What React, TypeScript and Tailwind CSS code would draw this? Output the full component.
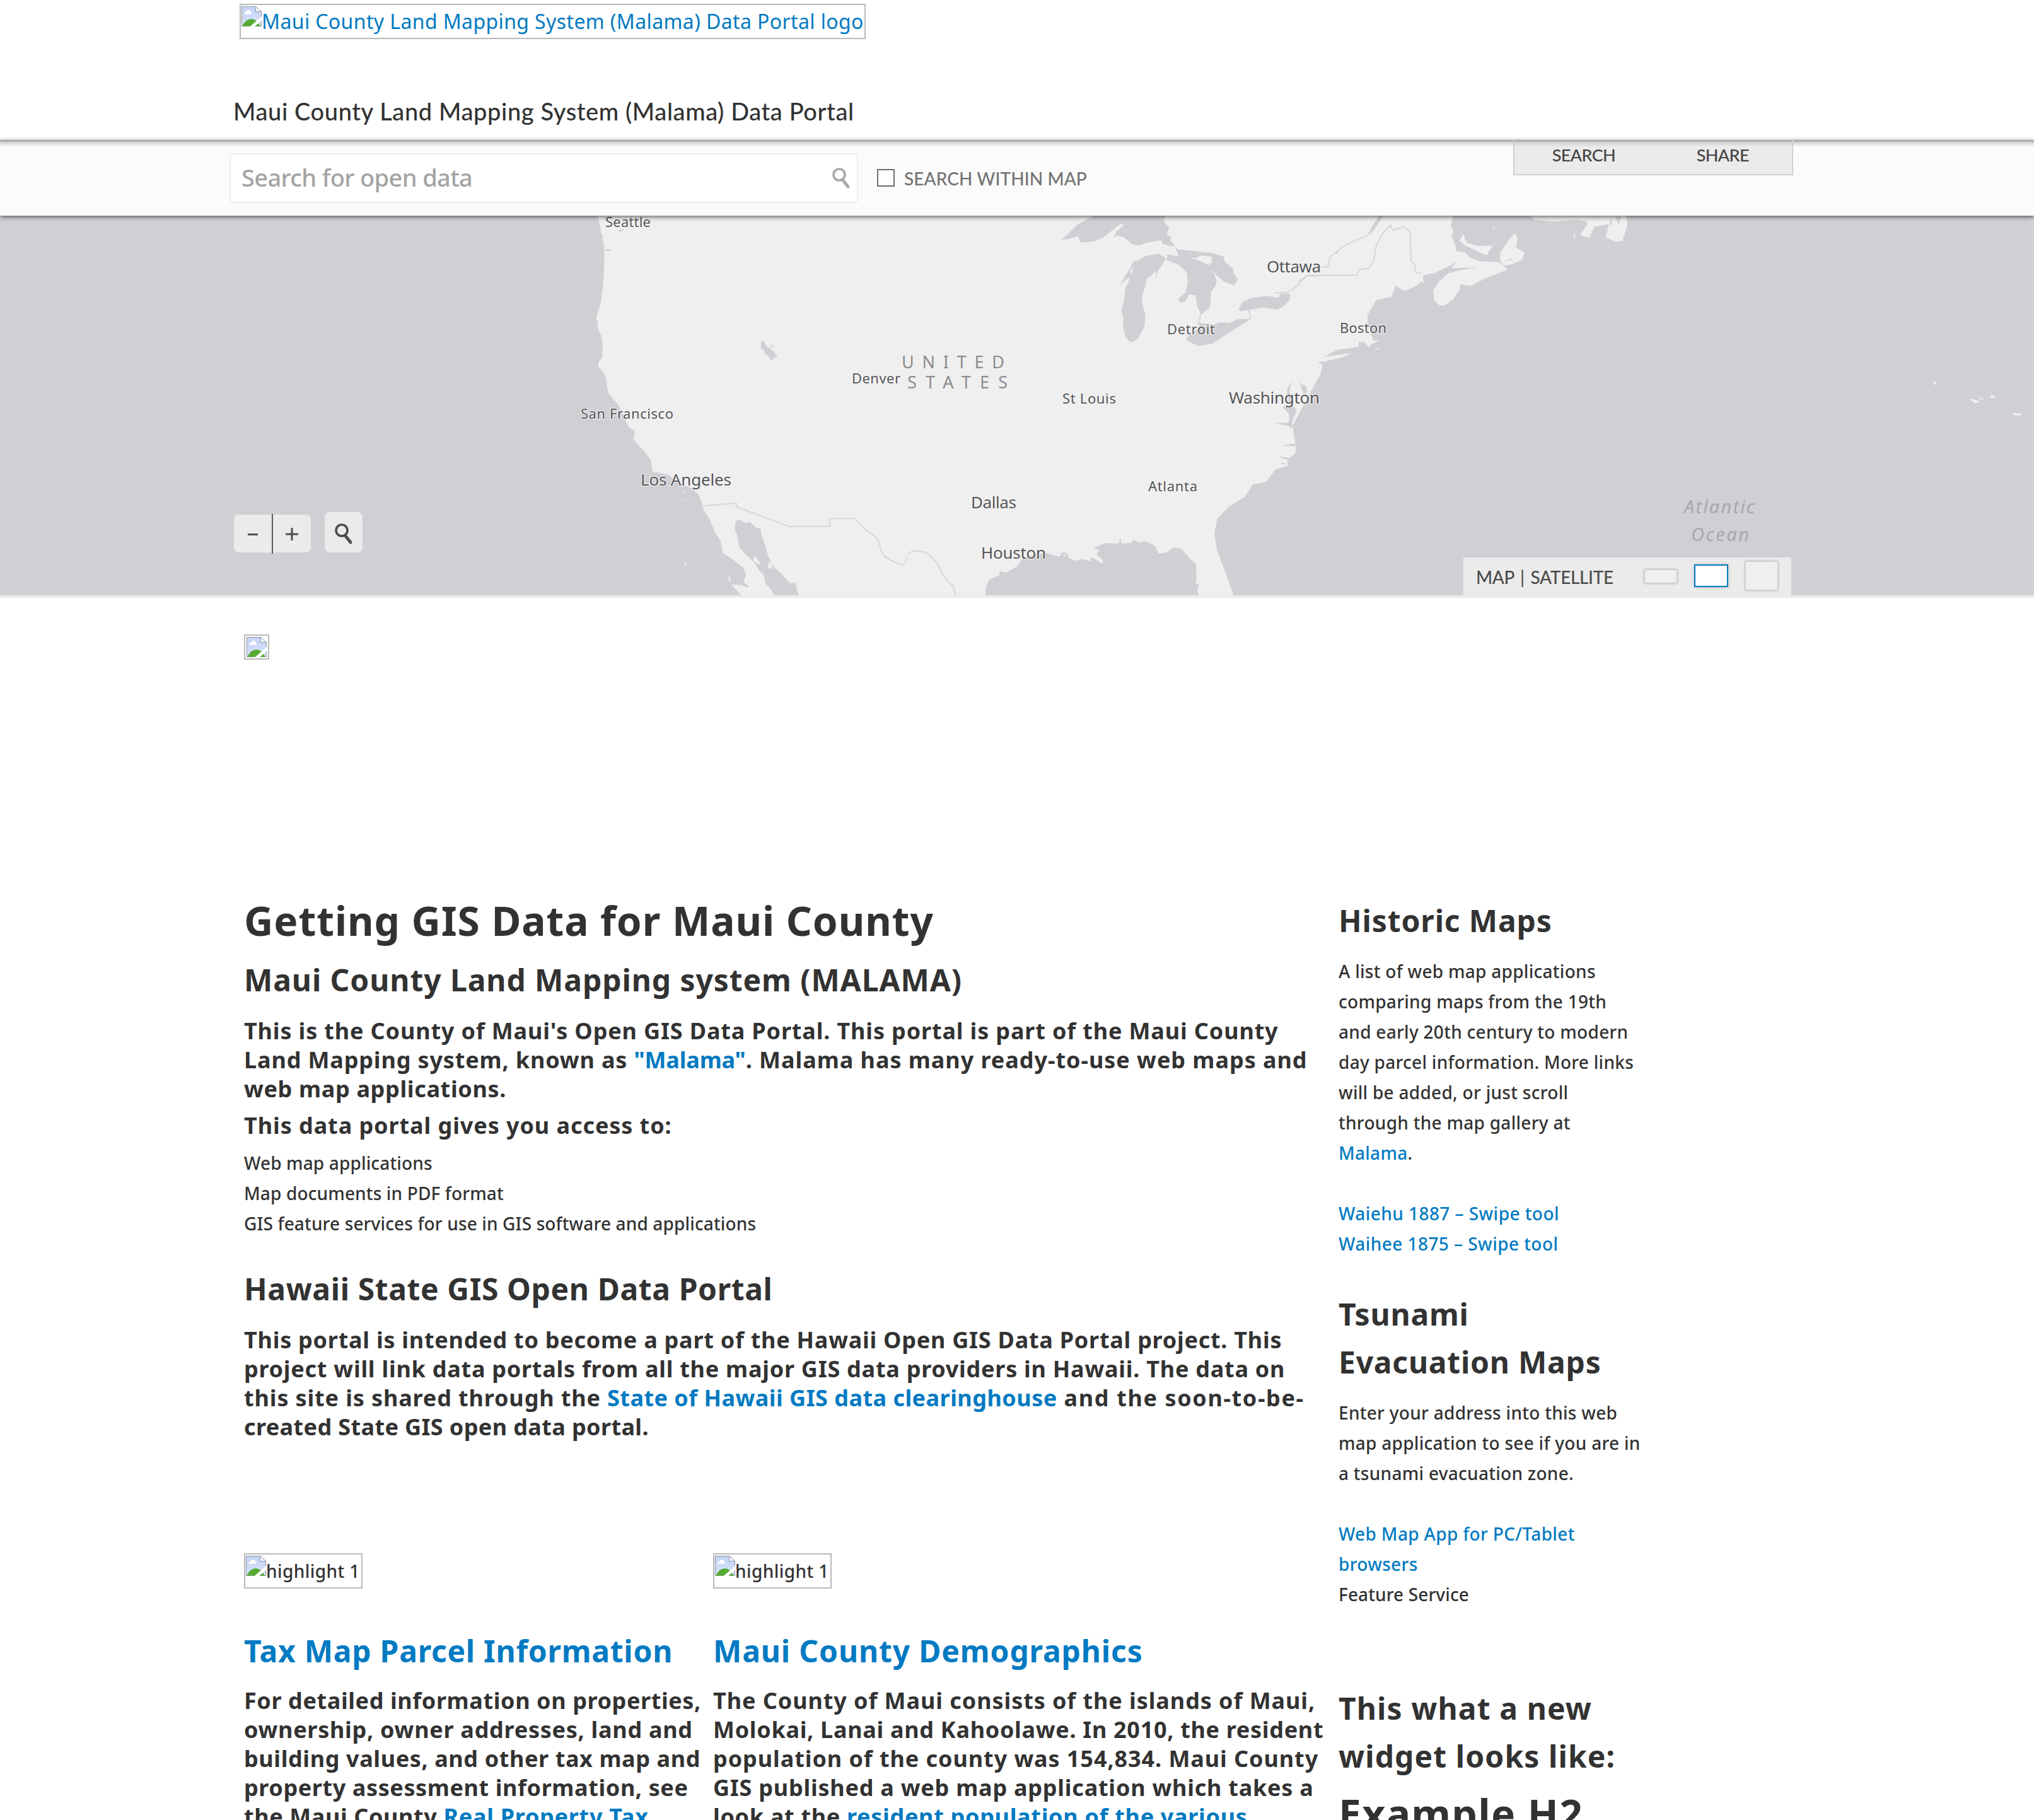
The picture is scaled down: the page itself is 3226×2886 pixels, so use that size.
import type { ReactNode } from "react";

function BrokenImage() {
  return (
    <svg className="size-8 shrink-0" viewBox="0 0 32 32">
      <defs>
        <linearGradient id="sky" x1="0" y1="0" x2="0" y2="1">
          <stop offset="0" stopColor="#c3d3f6" />
          <stop offset="1" stopColor="#d8e2f9" />
        </linearGradient>
      </defs>
      <path d="M.5.5H22.5L31.5 8.500V31.500H.5Z" fill="url(#sky)" stroke="#8f95a3" />
      <path d="M4 12.500q0-2.500 3-3 1-3.500 4-3.500 3.500 0 4 3.500 1.500.5 1.500 3Z" fill="#fff" />
      <path d="M1 31.500Q7 20 15.500 20T30 31.500Z" fill="#56ab31" />
      <path d="M13 32.500 32.500 15.500V22L20.500 32.500Z" fill="#fff" />
      <path d="M22.500.500V8.500H31.500Z" fill="#fff" stroke="#8f95a3" />
    </svg>
  );
}

function AltImage({ children, className }: { children: ReactNode; className: string }) {
  return (
    <div className={"flex items-start border-2 border-[#b9b9b9] pl-px pt-0.5 whitespace-nowrap " + className}>
      <BrokenImage />
      {children}
    </div>
  );
}

function A({ children, className = "" }: { children: ReactNode; className?: string }) {
  return <a className={"text-[#007ac2] " + className}>{children}</a>;
}

type Label = { t: string; x: number; y: number; w: number; s: number };

const labels: Label[] = [
  { t: "Seattle", x: 960, y: 359.5, w: 72, s: 22 },
  { t: "Denver", x: 1351, y: 607.5, w: 77, s: 22 },
  { t: "San Francisco", x: 921, y: 663.5, w: 147, s: 22 },
  { t: "Los Angeles", x: 1016, y: 770, w: 144, s: 26 },
  { t: "Detroit", x: 1851, y: 530, w: 76, s: 22 },
  { t: "Ottawa", x: 2009, y: 431.5, w: 86, s: 26 },
  { t: "St Louis", x: 1685, y: 640, w: 85, s: 22 },
  { t: "Washington", x: 1949, y: 640, w: 144, s: 26 },
  { t: "Atlanta", x: 1821, y: 778.5, w: 78, s: 22 },
  { t: "Dallas", x: 1540, y: 805.7, w: 72, s: 26 },
  { t: "Houston", x: 1556, y: 886, w: 103, s: 26 },
  { t: "Boston", x: 2125, y: 528, w: 74, s: 22 },
];

function WorldMap() {
  return (
    <svg className="block h-[602px] w-full bg-[#d0cfd4]" viewBox="0 342 3226 602" preserveAspectRatio="none">
      {/* Pacific coast, Baja and northern Mexico */}
      <g transform="translate(900 340) scale(.35714 .38903)">
        <path
          fill="#efefef"
          d="M135 5 150 75 158 90 155 100 163 125 164 200 158 290 148 360 135 400 127 425 135 440 135 465 150 495 156 530 155 580 137 605 137 620 160 645 173 670 175 700 183 730 205 755 228 780 240 800 262 850 275 870 298 880 298 895 293 915 310 935 340 965 370 1000 378 1048 420 1055 455 1065 480 1090 550 1115 580 1140 595 1170 602 1200 630 1240 655 1295 680 1330 690 1380 740 1410 780 1440 793 1465 783 1500 805 1515 800 1522 770 1510 728 1508 750 1530 775 1556H918L905 1530 880 1505 870 1465 855 1455 830 1420 790 1385 762 1355 755 1310 743 1285 748 1250 762 1243 790 1258 810 1253 835 1275 858 1280 860 1300 878 1350 890 1390 915 1435 960 1475 990 1505 1013 1500 1018 1530 1030 1556H1600V5Z"
        />
        <path fill="#efefef" d="M825 1395 838 1398 856 1420 850 1427 828 1415ZM897 1415 908 1418 908 1443 893 1444 890 1430ZM518 1418 530 1425 525 1436ZM716 1475 724 1478 722 1494 716 1494Z" />
        <path fill="#e2e2e5" d="M508 1125 520 1128 520 1136 510 1133ZM505 1158 518 1162 512 1170Z" />
        <path fill="#d0cfd4" d="M860 520 870 515 885 540 900 545 915 560 932 575 905 597 890 575 875 570 873 552 860 548ZM900 535 918 532 905 545ZM160 145 180 141 202 146 180 151ZM226 66 246 58 250 62 234 72Z" />
        <path fill="none" stroke="#d6d6d8" strokeWidth="5" d="M600 1188 750 1177V1192L985 1272H1165V1240H1278L1300 1265 1345 1300 1375 1320 1388 1350 1392 1370 1410 1395 1440 1412 1488 1431 1505 1410 1520 1382 1545 1372 1575 1377" />
      </g>

      {/* Great Lakes, Gulf coast and the southern Atlantic seaboard */}
      <g transform="translate(1440 340) scale(.42091 .38903)">
        <path fill="#efefef" d="M0 5H1580V1556H0Z" />
        <g fill="#d0cfd4">
          <path d="M578 103 600 82 640 40 690 12 700 5H968L965 30 985 55 975 80 992 92 988 105 1005 125 1000 132 960 120 955 105 900 115 870 128 845 122 815 95 790 86 776 92 785 70 815 42 800 40 770 65 735 95 700 110 650 115 642 88 600 102Z" />
          <path d="M1005 128 1015 142 1100 152 1145 157 1190 172 1195 195 1225 220 1228 240 1243 265 1230 290 1190 273 1165 250 1150 230 1163 270 1160 290 1142 315 1138 380 1105 408 1090 375 1085 330 1060 325 1045 355 1025 360 1018 345 1045 318 1055 280 1050 235 1020 205 975 187 978 163 1020 170Z" />
          <path d="M972 178 945 160 895 170 870 185 852 190 825 240 800 285 835 255 832 275 818 305 815 345 805 390 812 425 810 460 820 500 838 521 865 510 890 460 895 410 882 360 884 325 895 290 900 262 935 232 935 262 942 230 962 200Z" />
          <path d="M1295 425 1250 455 1200 490 1150 525 1100 537 1075 527 1046 510 1060 490 1100 462 1090 440 1150 450 1175 440 1210 443 1240 428Z" />
          <path d="M1246 388 1260 358 1290 342 1350 332 1395 340 1405 322 1440 325 1438 350 1415 375 1390 388 1340 380 1295 388 1255 395Z" />
          <path d="M290 1556 295 1520 305 1490 345 1470 345 1455 370 1460 410 1435 430 1405 480 1385 520 1380 570 1395 580 1378 600 1380 605 1398 630 1412 660 1405 690 1415 690 1395 735 1425 735 1410 710 1385 722 1370 700 1360 740 1340 795 1342 800 1313 805 1342 845 1338 850 1326 870 1337 895 1332 930 1350 945 1382 970 1380 1000 1358 1030 1362 1060 1400 1085 1425 1088 1480 1085 1505 1098 1505 1090 1530 1098 1556Z" />
          <path d="M1580 590 1545 605 1562 612 1555 650 1530 700 1512 735 1480 800 1450 860 1455 905 1462 950 1460 975 1430 1000 1430 1025 1385 1040 1350 1090 1300 1100 1270 1150 1210 1190 1165 1240 1155 1300 1165 1370 1200 1470 1228 1556H1580Z" />
          <path d="M1471 668 1480 690 1500 700 1506 725 1490 732ZM1448 680 1435 700 1428 720 1440 780 1412 785 1436 812 1436 848 1385 852 1432 862 1448 872 1448 845 1465 800 1450 780 1438 715ZM1408 942 1458 934 1458 946ZM1395 985 1440 993 1425 1000ZM1398 1016 1425 1010 1415 1019Z" />
        </g>
        <path fill="#efefef" d="M1058 175 1090 185 1135 207 1145 195 1145 172 1100 168 1088 178ZM835 230 850 215 842 245ZM580 1386 598 1386 592 1394Z" />
        <g fill="none" stroke="#d6d6d8" strokeWidth="5">
          <path d="M0 1385 20 1370 70 1378 110 1420 135 1475 170 1515 182 1556" />
          <path d="M1103 405 1098 440M1284 386 1290 425M1380 320 1430 318 1460 297 1500 252 1580 248" />
        </g>
      </g>

      {/* New England and the Canadian Maritimes */}
      <g transform="translate(2060 340) scale(.38266 .38903)">
        <path fill="#d0cfd4" d="M104 5H680V640H104Z" />
        <g fill="#efefef">
          <path d="M100 5H640L630 45 640 70 633 85 650 130 652 150 690 155 705 172 745 190 830 195 865 225 780 258 710 292 670 285 665 310 640 345 605 370 585 372 560 350 557 310 580 275 620 240 680 225 740 216 632 220 655 190 630 207 560 240 515 248 515 268 490 290 440 312 400 290 385 335 345 345 320 350 285 410 285 440 300 490 310 515 335 513 300 530 290 542 270 520 248 518 248 540 160 552 100 582Z" />
          <path d="M92 603 110 580 180 570 218 567 180 583ZM835 185 835 155 870 105 895 76 906 95 900 135 935 155 925 185 885 203 845 208ZM665 108 682 80 695 115 740 128 803 128 778 168 745 152 695 130ZM962 8 975 22 1050 28 1155 22 1200 35 1165 85 1205 95 1225 50 1285 40 1272 95 1315 112 1342 108 1362 40 1355 5H962ZM585 5H640L605 22ZM806 45 812 62 806 62ZM1140 70 1146 98 1140 98ZM510 268 522 272 516 282ZM315 545 335 548 320 551Z" />
        </g>
        <g fill="#d0cfd4">
          <path d="M332 5H352L308 68 285 88 298 60ZM145 158 170 142 160 160ZM1290 5 1300 40 1292 45ZM1312 10H1335L1325 42ZM880 178 850 192 882 184ZM1150 30 1195 22 1170 40Z" />
        </g>
        <g fill="none" stroke="#d6d6d8" strokeWidth="5">
          <path d="M285 85 225 110 170 140 130 175 120 212 90 215" />
          <path d="M0 272 40 248H240L250 225 290 220 310 190 320 130 345 80 380 43 390 65 435 50 462 75 465 190 480 205 485 235 510 242" />
        </g>
      </g>

      {/* Azores */}
      <g transform="translate(2600 340) scale(.39923 .38903)" fill="#f3f3f4">
        <ellipse cx="1175" cy="688" rx="5" ry="6" />
        <ellipse cx="1403" cy="743" rx="9" ry="5" />
        <path d="M1308 750 1322 753 1352 762 1335 770ZM1340 741 1368 752 1362 756ZM1480 806 1500 813 1522 809 1512 819 1490 818Z" />
      </g>

      <g fontFamily="'Noto Sans', sans-serif" fill="#565658" stroke="#f5f5f5" strokeWidth="2.5" strokeOpacity=".8" paintOrder="stroke">
        {labels.map((l) => (
          <text key={l.t} x={l.x} y={l.y} fontSize={l.s} textLength={l.w}>
            {l.t}
          </text>
        ))}
      </g>
      <g fontFamily="'Noto Sans', sans-serif" fontSize="27" fill="#8d8d8f">
        <text x="1430" y="584" textLength="163" lengthAdjust="spacing">UNITED</text>
        <text x="1439" y="615.500" textLength="159" lengthAdjust="spacing">STATES</text>
      </g>
      <g fontFamily="'Noto Sans', sans-serif" fontSize="29" fontStyle="italic" fill="#a9a8ad">
        <text x="2671" y="814" textLength="112">Atlantic</text>
        <text x="2682" y="857.500" textLength="92">Ocean</text>
      </g>
    </svg>
  );
}

function Magnifier({ className }: { className: string }) {
  return (
    <svg className={className} viewBox="0 0 28 33" fill="none" stroke="currentColor">
      <circle cx="11" cy="11" r="9" strokeWidth="3.600" />
      <path d="M17.500 20.500 25 30" strokeWidth="5" strokeLinecap="round" />
    </svg>
  );
}

const h2 = "text-[48px] leading-[60px] font-bold";
const h3 = "text-[36px] leading-[46px] font-bold";
const sideTitle = "text-[48px] leading-[76px] font-bold";
const body = "text-[28px] leading-[48px] font-medium";

export default function App() {
  return (
    <div className="h-[2886px] w-[3226px] overflow-hidden bg-white font-['Noto_Sans',sans-serif] whitespace-nowrap text-[#323232]">
      <header className="h-[222px] pt-1.5 pl-[380px]">
        <AltImage className="h-14 w-[993px]">
          <a className="text-[32px] leading-[47px] tracking-[0.012em] text-[#007ac2]">
            Maui County Land Mapping System (Malama) Data Portal logo
          </a>
        </AltImage>
        <div className="mt-[92px] -ml-[10px] font-[Lato,sans-serif] text-[38px] leading-[44px] font-medium tracking-[0.016em]">
          Maui County Land Mapping System (Malama) Data Portal
        </div>
      </header>

      <div className="relative z-10 flex h-[120px] items-start bg-[linear-gradient(to_bottom,#a9a9a9_0,#a9a9a9_2px,#cfcfcf_3px,#fbfbfb_11px)] pl-[364px] shadow-[0_2px_7px_rgba(0,0,0,0.6)]">
        <div className="mt-[21px] flex h-[79px] w-[997px] items-center justify-between rounded-md border-2 border-[#ececec] bg-white pr-[11px] pl-[17px]">
          <span className="-mt-1 text-[38px] leading-[50px] font-medium tracking-[-0.0165em] text-[#a4a4a4]">Search for open data</span>
          <Magnifier className="h-[33px] w-[28px] text-[#a8a8a8]" />
        </div>
        <div className="mt-[46px] ml-[30px] size-7 border-2 border-[#6f6f6f] bg-white" />
        <span className="mt-[41px] ml-[15px] font-[Lato,sans-serif] text-[28px] leading-[40px] font-medium tracking-[0.003em] text-[#737373]">SEARCH WITHIN MAP</span>
        <div className="ml-[676px] flex h-14 w-[444px] border-2 border-t-0 border-[#d0d0d0] bg-[linear-gradient(to_bottom,#a9a9a9_0,#a9a9a9_2px,#cfcfcf_3px,#ebebeb_11px)] pl-[60px] font-[Lato,sans-serif] text-[27px] leading-[48px] font-medium tracking-[-0.025em] text-[#444]">
          <span className="w-[229px]">SEARCH</span>
          <span>SHARE</span>
        </div>
      </div>

      <div className="relative border-b-4 border-[#ebebeb]">
        <WorldMap />
        <div className="absolute bottom-[68px] left-[371px] flex items-end text-[#4e4e4e]">
          <div className="flex h-[60px] w-[122px] items-center rounded-lg bg-[#ebebeb]">
            <div className="flex w-[60px] justify-center">
              <div className="mt-0.5 h-[3px] w-4 bg-[#4e4e4e]" />
            </div>
            <div className="h-[63px] w-0.5 bg-[#5c5c5f]" />
            <svg className="mx-auto mt-0.5 size-5" viewBox="0 0 20 20" stroke="#4e4e4e" strokeWidth="3">
              <path d="M0 10H20M10 0V20" />
            </svg>
          </div>
          <div className="ml-[22px] flex h-16 w-[60px] items-center justify-center rounded-lg bg-[#ebebeb]">
            <Magnifier className="mt-1 h-[33px] w-[28px]" />
          </div>
        </div>
        <div className="absolute right-[385px] bottom-0 flex h-[60px] w-[520px] items-center bg-[#ebebeb] pl-[20px] font-[Lato,sans-serif] text-[28px] font-medium text-[#4c4c4c]">
          <span className="w-[266px] pt-0.5 leading-[64px] tracking-[-0.012em] [word-spacing:3px]">MAP | SATELLITE</span>
          <div className="h-6 w-[54px] shrink-0 rounded border-2 border-[#d0d0d0] bg-[#efefef] shadow-[0_0_3px_rgba(0,0,0,0.2)]" />
          <div className="-mt-0.5 ml-[26px] h-9 w-[54px] shrink-0 border-2 border-[#007ac2] bg-white shadow-[0_0_5px_rgba(0,0,0,0.25)]" />
          <div className="-mt-0.5 ml-[26px] h-12 w-[54px] shrink-0 rounded border-2 border-[#d0d0d0] bg-[#efefef] shadow-[0_0_3px_rgba(0,0,0,0.2)]" />
        </div>
      </div>

      <main className="flex pl-[387px]">
        <div className="w-[1736px] shrink-0 pt-[58px]">
          <div className="flex size-10 items-center justify-center border-2 border-[#b9b9b9]">
            <BrokenImage />
          </div>
          <h1 className="mt-[374px] text-[64px] leading-[80px] font-bold tracking-[0.0148em]">Getting GIS Data for Maui County</h1>
          <h2 className={h2 + " mt-6 tracking-[0.019em]"}>Maui County Land Mapping system (MALAMA)</h2>
          <p className={h3 + " mt-[28px] tracking-[0.0235em]"}>
            This is the County of Maui's Open GIS Data Portal. This portal is part of the Maui County
            <br />
            Land Mapping system, known as <A className="tracking-[-0.005em]">"Malama"</A>
            <span className="tracking-[0.0265em]">. Malama has many ready-to-use web maps and</span>
            <br />
            <span className="tracking-[0.018em]">web map applications.</span>
          </p>
          <p className={h3 + " mt-3 tracking-[0.0255em]"}>This data portal gives you access to:</p>
          <ul className={body + " mt-[12px] tracking-[0.005em]"}>
            <li>Web map applications</li>
            <li>Map documents in PDF format</li>
            <li>GIS feature services for use in GIS software and applications</li>
          </ul>
          <h2 className={h2 + " mt-[50px] tracking-[0.0125em]"}>Hawaii State GIS Open Data Portal</h2>
          <p className={h3 + " mt-[28px] tracking-[0.0206em]"}>
            This portal is intended to become a part of the Hawaii Open GIS Data Portal project. This
            <br />
            project will link data portals from all the major GIS data providers in Hawaii. The data on
            <br />
            <span className="tracking-[0.024em]">this site is shared through the </span>
            <A className="tracking-[0.0128em]">State of Hawaii GIS data clearinghouse</A>
            <span className="tracking-[0.045em]"> and the soon-to-be-</span>
            <br />
            <span className="tracking-[0.0105em]">created State GIS open data portal.</span>
          </p>
          <div className="mt-[177px] flex">
            <section className="w-[744px] shrink-0">
              <AltImage className="h-14 w-[188px]">
                <span className="text-[28px] leading-[48px] font-medium tracking-[0.015em]">highlight 1</span>
              </AltImage>
              <h2 className={h2 + " mt-[69px] tracking-[0.0155em] text-[#007ac2]"}>Tax Map Parcel Information</h2>
              <p className={h3 + " mt-[26px] tracking-[0.0165em]"}>
                For detailed information on properties,
                <br />
                <span className="tracking-[0.02em]">ownership, owner addresses, land and</span>
                <br />
                building values, and other tax map and
                <br />
                property assessment information, see
                <br />
                the Maui County <A className="tracking-[0.02em]">Real Property Tax</A>
              </p>
            </section>
            <section>
              <AltImage className="h-14 w-[188px]">
                <span className="text-[28px] leading-[48px] font-medium tracking-[0.015em]">highlight 1</span>
              </AltImage>
              <h2 className={h2 + " mt-[69px] tracking-[0.018em] text-[#007ac2]"}>Maui County Demographics</h2>
              <p className={h3 + " mt-[26px] tracking-[0.0255em]"}>
                The County of Maui consists of the islands of Maui,
                <br />
                <span className="tracking-[0.019em]">Molokai, Lanai and Kahoolawe. In 2010, the resident</span>
                <br />
                population of the county was 154,834. Maui County
                <br />
                <span className="tracking-[0.021em]">GIS published a web map application which takes a</span>
                <br />
                <span className="tracking-[0.019em]">
                  look at the <A>resident population of the various</A>
                </span>
              </p>
            </section>
          </div>
        </div>

        <aside className="pt-[474px]">
          <h2 className={sideTitle + " tracking-[0.018em]"}>Historic Maps</h2>
          <p className={body + " mt-[18px] tracking-[0.01em]"}>
            A list of web map applications
            <br />
            comparing maps from the 19th
            <br />
            and early 20th century to modern
            <br />
            day parcel information. More links
            <br />
            will be added, or just scroll
            <br />
            through the map gallery at
            <br />
            <A>Malama</A>.
          </p>
          <p className={body + " mt-12 tracking-[0.016em]"}>
            <A>Waiehu 1887 – Swipe tool</A>
            <br />
            <A>Waihee 1875 – Swipe tool</A>
          </p>
          <h2 className={sideTitle + " mt-[50px] tracking-[0.016em]"}>
            Tsunami
            <br />
            Evacuation Maps
          </h2>
          <p className={body + " mt-[18px] tracking-[0.01em]"}>
            Enter your address into this web
            <br />
            map application to see if you are in
            <br />a tsunami evacuation zone.
          </p>
          <p className={body + " mt-12 tracking-[0.012em]"}>
            <A>
              Web Map App for PC/Tablet
              <br />
              browsers
            </A>
            <br />
            <span className="tracking-[0.004em]">Feature Service</span>
          </p>
          <h2 className={sideTitle + " mt-[119px] tracking-[0.023em]"}>
            This what a new
            <br />
            widget looks like:
          </h2>
          <h2 className="mt-[13px] text-[64px] leading-[80px] font-bold tracking-[0.023em]">Example H2</h2>
        </aside>
      </main>
    </div>
  );
}
